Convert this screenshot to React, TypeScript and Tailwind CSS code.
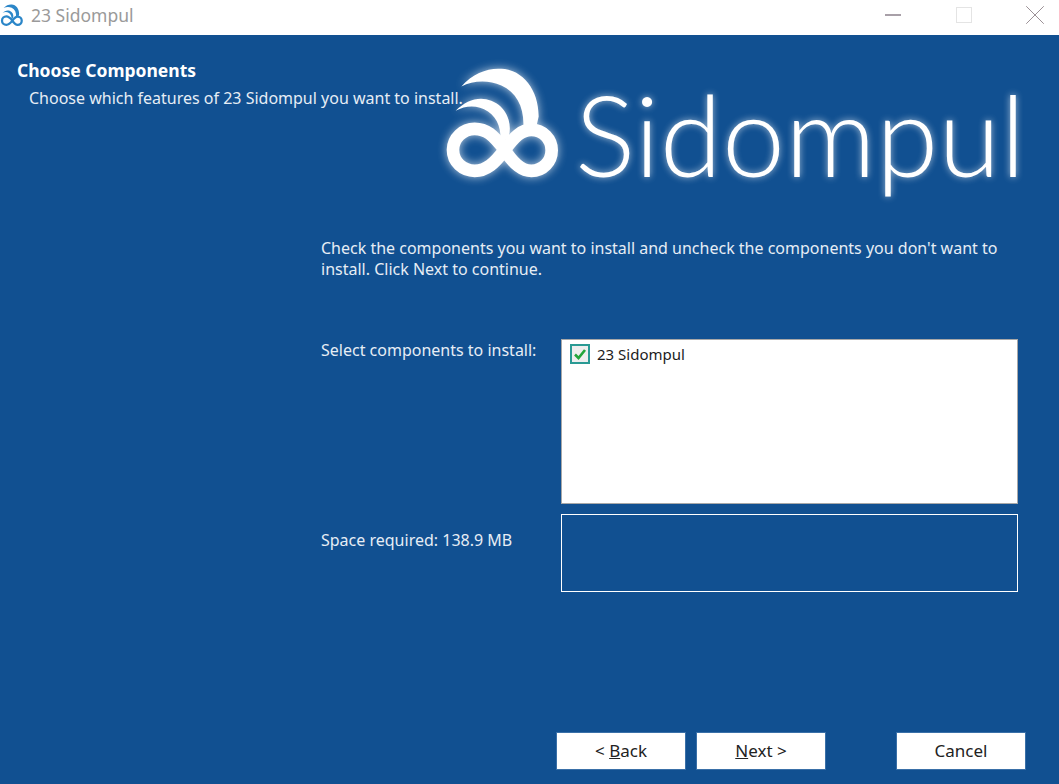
import { X } from "lucide-react";

const uiFont = "font-['Noto_Sans','Open_Sans',sans-serif]";

function LogoMark({ className, ringWidth = 38 }: { className?: string; ringWidth?: number }) {
  return (
    <svg viewBox="40 40 360 350" fill="none" className={className}>
      <path
        d="M225 300 C190 255 170 237 135 237 C100 237 70 265 70 300 C70 337 100 363 135 363 C170 363 195 340 225 300 C255 260 275 240 305 240 C340 240 366 268 366 301 C366 335 340 363 305 363 C275 363 250 340 225 300 Z"
        stroke="currentColor"
        strokeWidth={ringWidth}
      />
      <path
        d="M95 110 C130 70 175 54 215 57 C280 60 327 120 327 200 L318 240 L280 245 C287 180 265 130 215 107 C175 89 130 92 95 110 Z"
        fill="currentColor"
      />
      <path
        d="M78 183 C110 150 150 138 185 153 C228 170 248 215 238 258 L212 285 C216 240 205 205 175 185 C145 165 110 165 78 183 Z"
        fill="currentColor"
      />
    </svg>
  );
}

function WizardButton({ children }: { children: React.ReactNode }) {
  return (
    <button
      type="button"
      className="h-[38px] w-[130px] bg-white text-[17px] text-[#222] shadow-[0_0_0_1px_#3a70a8_inset]"
    >
      {children}
    </button>
  );
}

export default function App() {
  return (
    <div className={`flex h-[784px] w-[1059px] flex-col overflow-hidden bg-[#115091] ${uiFont}`}>
      {/* title bar */}
      <div className="flex h-[35px] shrink-0 items-center bg-white pb-[6px]">
        <LogoMark className="h-[24px] w-[24px] text-[#2b86c8]" ringWidth={34} />
        <span className="ml-[7px] text-[17.5px] leading-[24px] text-[#9a9a9a]">23 Sidompul</span>
        <div className="ml-auto flex items-center">
          <div className="h-[2px] w-[16px] bg-[#a8a0a8]" />
          <div className="ml-[55px] h-[16px] w-[16px] border border-[#e4e4e4]" />
          <X size={34} strokeWidth={0.7} className="ml-[46px] mr-[7px] text-[#9a9095]" />
        </div>
      </div>

      <div className="relative flex flex-1 flex-col">
        {/* logo sits over the header text */}
        <div className="absolute left-[443px] top-[28px] flex items-start">
          <LogoMark className="h-[117px] w-[120px] text-white drop-shadow-[0_0_5px_rgba(255,255,255,0.7)]" />
          <span className="ml-[12px] mt-[5px] font-['Lato',sans-serif] text-[113px] font-light leading-[130px] text-white [text-shadow:0_0_7px_rgba(255,255,255,0.65)]">
            Sidompul
          </span>
        </div>

        <div className="pl-[17px] pt-[24px]">
          <h1 className="text-[17.5px] font-bold leading-[22px] text-white">Choose Components</h1>
          <p className="ml-[12px] mt-[7px] text-[16px] leading-[20px] text-[#e6edf5]">
            Choose which features of 23 Sidompul you want to install.
          </p>
        </div>

        <div className="ml-[321px] mt-[130px] w-[690px] text-[16px] leading-[21px] text-[#e6edf5]">
          Check the components you want to install and uncheck the components you don't want to install. Click Next to continue.
        </div>

        <div className="ml-[321px] mt-[59px] grid w-[697px] grid-cols-[240px_1fr] gap-y-[10px] text-[16px] text-[#e6edf5]">
          <div className="pt-[1px] leading-[21px]">Select components to install:</div>
          <div className="h-[165px] border border-[#a8a8a8] bg-white pl-[8px] pt-[4px]">
            <div className="flex items-center gap-[7px] text-[15px] text-[#1c1c1c]">
              <span className="flex h-[20px] w-[20px] items-center justify-center border-2 border-[#2a9a94] bg-[#eeeeee]">
                <svg viewBox="0 0 14 14" className="h-[14px] w-[14px]" fill="none">
                  <path d="M2 7.5 L5.5 11 L12 3" stroke="#22a53a" strokeWidth="2.6" />
                </svg>
              </span>
              <span className="leading-[20px]">23 Sidompul</span>
            </div>
          </div>
          <div className="pt-[16px] leading-[21px]">Space required: 138.9 MB</div>
          <div className="h-[78px] border border-white" />
        </div>

        <div className="mb-[14px] mr-[33px] mt-auto flex justify-end">
          <WizardButton>
            &lt; <span className="underline">B</span>ack
          </WizardButton>
          <div className="ml-[10px]">
            <WizardButton>
              <span className="underline">N</span>ext &gt;
            </WizardButton>
          </div>
          <div className="ml-[70px]">
            <WizardButton>Cancel</WizardButton>
          </div>
        </div>
      </div>
    </div>
  );
}
